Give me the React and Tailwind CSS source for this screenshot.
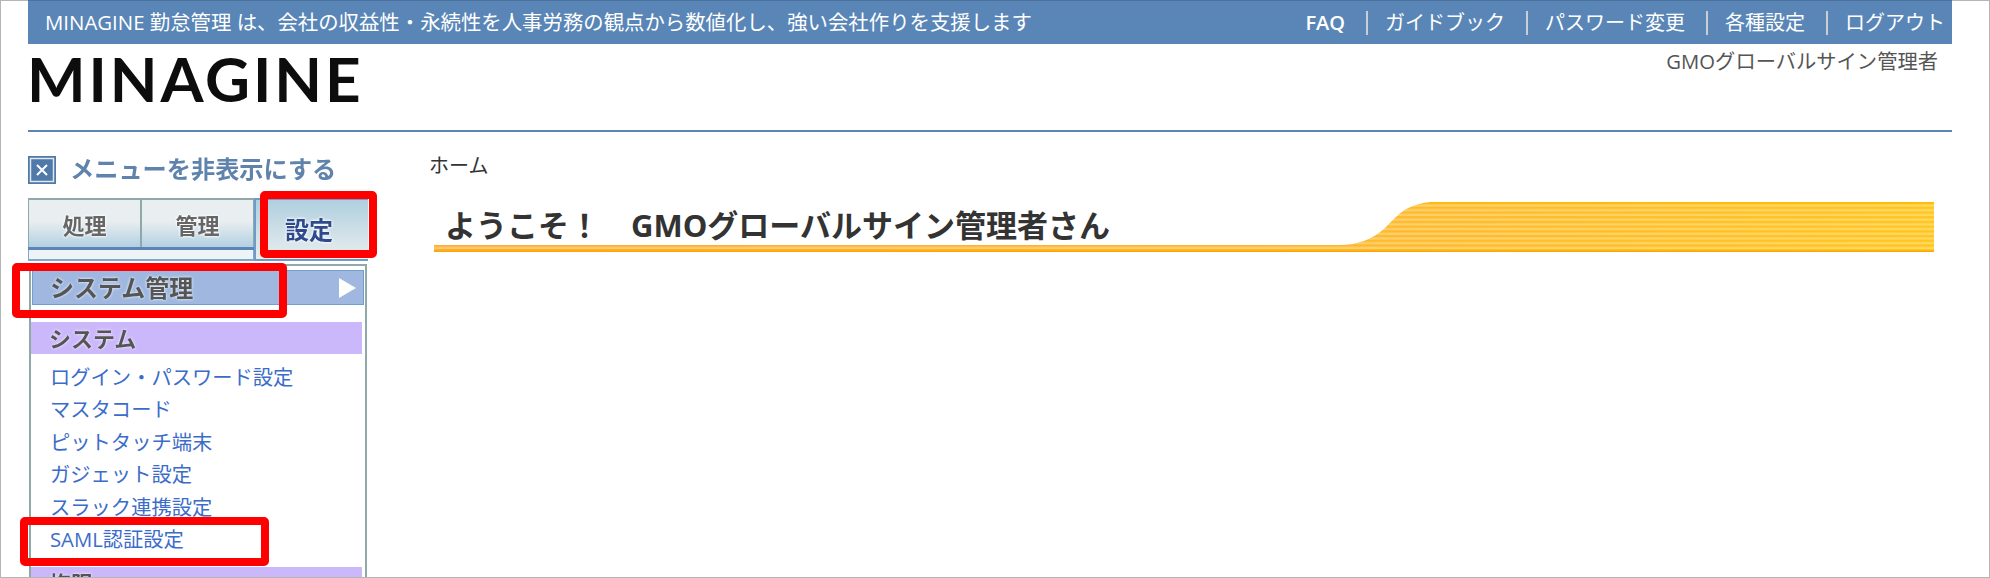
import React from 'react';

const jp = "font-['Open_Sans','Noto_Sans_CJK_JP',sans-serif]";
const navItems = ['ガイドブック', 'パスワード変更', '各種設定', 'ログアウト'];
const links = ['ログイン・パスワード設定', 'マスタコード', 'ピットタッチ端末', 'ガジェット設定', 'スラック連携設定', 'SAML認証設定'];

const Banner = () => (
  <svg className="absolute inset-0" width="1500" height="50" viewBox="0 0 1500 50">
    <defs>
      <linearGradient id="bannerBase" x1="0" x2="1" y1="0" y2="0">
        <stop offset="0" stopColor="#fdae34" />
        <stop offset="0.6" stopColor="#fdb92e" />
        <stop offset="1" stopColor="#ffc61e" />
      </linearGradient>
      <pattern id="bannerStripes" width="10" height="4.7" patternUnits="userSpaceOnUse">
        <rect y="2.4" width="10" height="2.3" fill="#fff" fillOpacity="0.3" />
      </pattern>
    </defs>
    <path d="M0 43 L905 43 C925 43 938 37 950 27 C962 15 968 7 982 3 C988 1 992 0 1000 0 L1500 0 L1500 50 L0 50 Z" fill="url(#bannerBase)" />
    <path d="M0 43 L905 43 C925 43 938 37 950 27 C962 15 968 7 982 3 C988 1 992 0 1000 0 L1500 0 L1500 50 L0 50 Z" fill="url(#bannerStripes)" />
    <rect x="995" width="505" height="1.5" fill="#ffbb00" />
    <rect y="48.5" width="1500" height="1.5" fill="#fca800" />
  </svg>
);

const CloseIcon = () => (
  <svg width="28" height="28" viewBox="0 0 28 28" className="shrink-0">
    <rect width="28" height="28" fill="#4f79a8" />
    <rect x="2.5" y="2.5" width="23" height="23" fill="none" stroke="#dfe7f0" strokeWidth="1.5" />
    <path d="M9 9 L19 19 M19 9 L9 19" stroke="#fff" strokeWidth="2" />
  </svg>
);

const Tab = ({ label }) => (
  <div className="flex h-full flex-1 items-center justify-center border-x border-t-2 border-[#8fa9a9] bg-gradient-to-b from-[#e9eef0] from-45% to-[#b2d0e2] pt-1 text-[22px] font-bold text-[#666] blur-[0.4px] [text-shadow:0_0_3px_#fff,0_0_3px_#fff]">
    {label}
  </div>
);

export default function App() {
  return (
    <div className={`relative h-[578px] w-[1990px] overflow-hidden border-x border-b border-[#b5b5b5] bg-white ${jp}`}>
      <div className="border-t border-[#b5b5b5]" />
      <div className="ml-[27px] w-[1924px]">
        <header className="-mt-px flex h-[44px] items-center justify-between border-t border-[#4a709c] bg-[#5986b7] pl-[17px] pr-[7px] text-[20.4px] text-white">
          <div>MINAGINE 勤怠管理 は、会社の収益性・永続性を人事労務の観点から数値化し、強い会社作りを支援します</div>
          <nav className="flex items-center text-[20px]">
            <span className="pr-[21px] font-semibold">FAQ</span>
            {navItems.map((item, i) => (
              <span key={item} className="flex items-center">
                <span className="h-[24px] w-[2px] bg-[#c9ced3]" />
                <span className={i === navItems.length - 1 ? 'pl-[17px]' : 'pl-[17px] pr-[21px]'}>{item}</span>
              </span>
            ))}
          </nav>
        </header>

        <div className="flex h-[88px] justify-between border-b-2 border-[#5986b7]">
          <div className="-ml-px h-[68px] font-['Lato',sans-serif] text-[62px] font-bold leading-[68px] tracking-[2.9px] text-[#0d0d0d] blur-[0.5px]">MINAGINE</div>
          <div className="pr-[14px] pt-[2px] text-[20.3px] leading-[30px] text-[#555]">GMOグローバルサイン管理者</div>
        </div>

        <div className="flex">
          <aside className="w-[340px] shrink-0 pt-[24px]">
            <div className="flex h-[28px] items-center gap-[14px] whitespace-nowrap">
              <CloseIcon />
              <span className="-mt-[2px] text-[24.2px] font-bold text-[#5f83ac] blur-[0.4px]">メニューを非表示にする</span>
            </div>

            <div className="mt-[14px] flex h-[63px]">
              <div className="flex w-[226px] flex-col">
                <div className="flex h-[52px] border-b-[3px] border-[#5986b7]">
                  <Tab label="処理" />
                  <Tab label="管理" />
                </div>
                <div className="flex-1 border-x border-b-2 border-[#7fa6cc] bg-[#eef3f5]" />
              </div>
              <div className="flex flex-1 items-center justify-center border-b-2 border-l-2 border-t-2 border-[#6f9bc8] bg-gradient-to-b from-[#afcfdf] to-[#e9eeee] pr-[6px] text-[24px] font-bold text-[#2f4a8c] [text-shadow:0_0_3px_#fff,0_0_3px_#fff]">
                <span className="blur-[0.4px]">設定</span>
              </div>
            </div>

            <div className="ml-px mt-[3px] w-[338px] border-x-2 border-t-2 border-[#8fa9a9] pt-[4px]">
              <div className="mx-px flex h-[35px] items-center justify-between border border-[#6f9fd0] bg-[#a0b8e0] pl-[17px] pr-[7px] text-[24px] font-bold text-[#555] [text-shadow:0_0_3px_#fff]">
                <span className="blur-[0.4px]">システム管理</span>
                <svg width="17" height="20" viewBox="0 0 17 20"><path d="M0 0 L17 10 L0 20 Z" fill="#fff" /></svg>
              </div>
              <div className="mr-[3px] mt-[17px] flex h-[32px] items-center bg-[#cbb8fb] pl-[18px] text-[22px] font-bold text-[#555] [text-shadow:0_0_3px_#fff]">
                <span className="blur-[0.4px]">システム</span>
              </div>
              <ul className="mt-[7px] pl-[19px] text-[20.3px] text-[#3b6cc9]">
                {links.map((link) => (
                  <li key={link} className="flex h-[32.4px] items-center">{link}</li>
                ))}
              </ul>
              <div className="mr-[3px] mt-[12px] flex h-[32px] items-center bg-[#cbb8fb] pl-[18px] text-[22px] font-bold text-[#555] [text-shadow:0_0_3px_#fff]">
                <span className="blur-[0.4px]">権限</span>
              </div>
            </div>
          </aside>

          <main className="pl-[61px] pt-[20px]">
            <div className="text-[20px] leading-[28px] text-[#333]">ホーム</div>
            <div className="relative ml-[5px] mt-[22px] h-[50px] w-[1500px]">
              <Banner />
              <h1 className="relative pl-[11px] text-[31px] font-bold leading-[46px] text-[#333]">ようこそ！　GMOグローバルサイン管理者さん</h1>
            </div>
          </main>
        </div>
      </div>

      {/* red annotation boxes drawn over the screenshot */}
      <div className="absolute left-[259px] top-[191px] h-[67px] w-[117px] rounded-[5px] border-8 border-[#ff0000]" />
      <div className="absolute left-[11px] top-[263px] h-[55px] w-[275px] rounded-[5px] border-8 border-[#ff0000]" />
      <div className="absolute left-[19px] top-[517px] h-[49px] w-[249px] rounded-[5px] border-8 border-[#ff0000]" />
    </div>
  );
}
